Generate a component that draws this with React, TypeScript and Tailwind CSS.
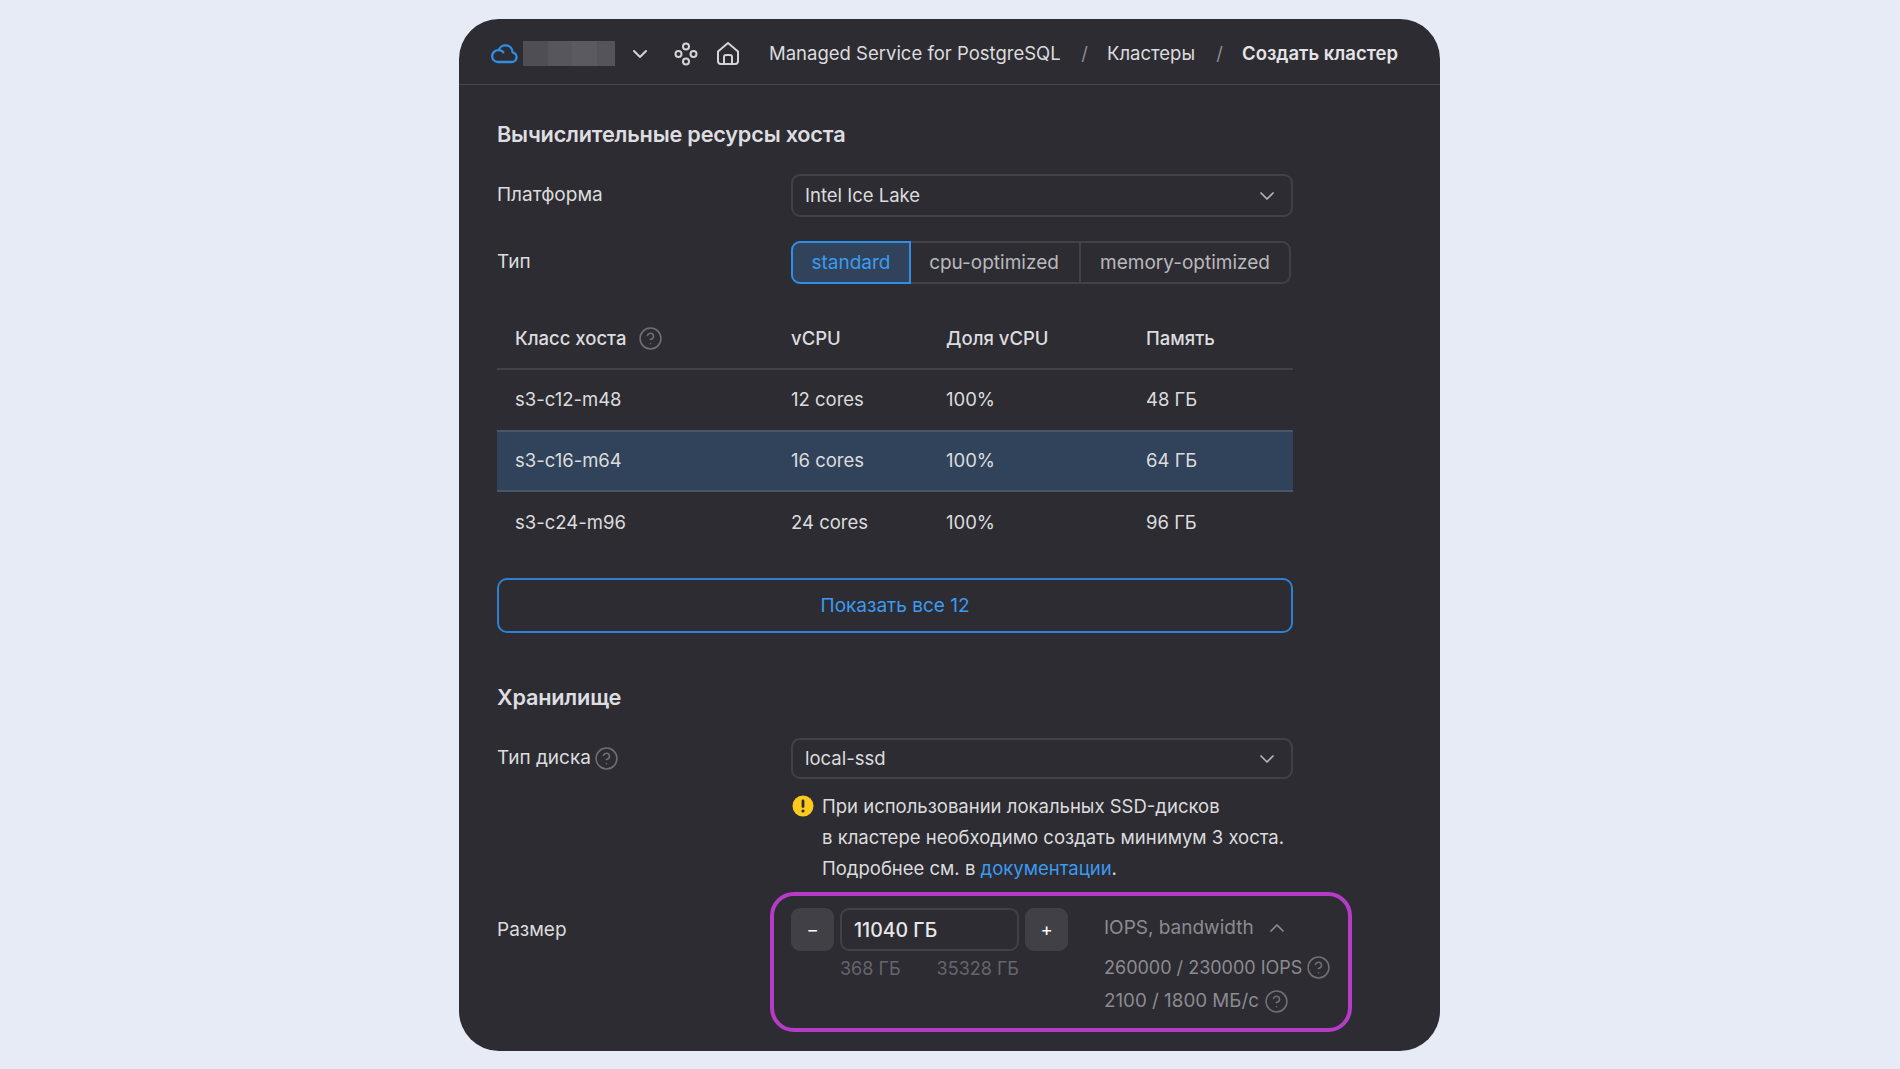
import { ReactNode } from 'react';
import { ChevronDown, ChevronUp, CircleHelp } from 'lucide-react';

const fontStack = 'font-["Inter","Noto_Sans",sans-serif]';

const rows = [
  { name: 's3-c12-m48', cores: '12 cores', share: '100%', memory: '48 ГБ', height: 'h-[60px]', selected: false },
  { name: 's3-c16-m64', cores: '16 cores', share: '100%', memory: '64 ГБ', height: 'h-[62px]', selected: true },
  { name: 's3-c24-m96', cores: '24 cores', share: '100%', memory: '96 ГБ', height: 'h-[61px]', selected: false },
];

function Help() {
  return <CircleHelp size={25} strokeWidth={1.5} className="-my-1 shrink-0 text-[#6f6e74]" />;
}

function CloudIcon() {
  return (
    <svg width="27" height="23" viewBox="0 0 27 23" fill="none" stroke="#2f8fe8" strokeWidth="2.3" strokeLinejoin="round" strokeLinecap="round" className="-mt-[2px]">
      <path d="M6.5 21h14.2a4.9 4.9 0 0 0 .9-9.7A7.2 7.2 0 0 0 7.6 9.2 5.9 5.9 0 0 0 6.5 21Z" />
      <path d="M7.6 9.2c2-.3 3.6.5 4.7 2" />
    </svg>
  );
}

function NodesIcon() {
  return (
    <svg width="24" height="24" viewBox="0 0 24 24" fill="none" stroke="#d4d4d6" strokeWidth="2">
      <circle cx="12" cy="4.5" r="3" />
      <circle cx="4.5" cy="12" r="3" />
      <circle cx="19.5" cy="12" r="3" />
      <circle cx="12" cy="19.5" r="3" />
    </svg>
  );
}

function HomeIcon() {
  return (
    <svg width="24" height="25" viewBox="0 0 24 25" fill="none" stroke="#d4d4d6" strokeWidth="2" strokeLinejoin="round">
      <path d="M2 10.5 12 2l10 8.5V20a3 3 0 0 1-3 3H5a3 3 0 0 1-3-3V10.5Z" />
      <path d="M8 23v-7a2 2 0 0 1 2-2h4a2 2 0 0 1 2 2v7" />
    </svg>
  );
}

function WarningIcon() {
  return (
    <svg width="22" height="22" viewBox="0 0 22 22" className="shrink-0">
      <circle cx="11" cy="11" r="10.5" fill="#fcc921" />
      <rect x="9.6" y="4.6" width="2.8" height="8.4" rx="1.4" fill="#2d2c33" />
      <circle cx="11" cy="16" r="1.6" fill="#2d2c33" />
    </svg>
  );
}

function Select({ value }: { value: string }) {
  return (
    <div className="flex h-full w-[502px] shrink-0 items-center justify-between rounded-[9px] border-2 border-[#424148] px-[12px] text-[#dcdcdd]">
      <span>{value}</span>
      <ChevronDown size={24} strokeWidth={1.7} className="text-[#b5b5b8]" />
    </div>
  );
}

function FormRow({ label, children, className }: { label: ReactNode; children: ReactNode; className?: string }) {
  return (
    <div className={`flex items-center ${className ?? ''}`}>
      <div className="flex w-[294px] shrink-0 items-center gap-[3px] text-[19px] text-[#dcdcdd]">{label}</div>
      {children}
    </div>
  );
}

function Heading({ children, className }: { children: ReactNode; className?: string }) {
  return (
    <h2 className={`h-[28px] text-[21.7px] font-semibold leading-[28px] tracking-[-0.2px] text-[#dedee0] ${className ?? ''}`}>
      {children}
    </h2>
  );
}

export default function App() {
  return (
    <div className={`h-[1069px] w-[1900px] overflow-hidden bg-[#e6ebf5] pl-[459px] pt-[19px] text-[18.5px] ${fontStack}`}>
      <div className="relative h-[1032px] w-[981px] overflow-hidden rounded-[40px] bg-[#2d2c33]">
        {/* breadcrumb bar */}
        <header className="flex h-[66px] items-center border-b border-[#47464c] pl-[32px] pt-[4px] text-[#dcdcdd]">
          <CloudIcon />
          <div className="ml-[5px] flex h-[25px] w-[92px]">
            <div className="w-[25px] bg-[#4f4e55]" />
            <div className="w-[24px] bg-[#57565c]" />
            <div className="w-[25px] bg-[#5b5a60]" />
            <div className="w-[18px] bg-[#55545a]" />
          </div>
          <ChevronDown size={24} strokeWidth={2} className="ml-[13px] text-[#d4d4d6]" />
          <div className="ml-[22px]">
            <NodesIcon />
          </div>
          <div className="ml-[18px]">
            <HomeIcon />
          </div>
          <span className="ml-[29px] w-[293px] whitespace-nowrap">Managed Service for PostgreSQL</span>
          <span className="w-[45px] text-center text-[#8d8c91]">/</span>
          <span className="w-[90px] whitespace-nowrap">Кластеры</span>
          <span className="w-[45px] text-center text-[#8d8c91]">/</span>
          <span className="whitespace-nowrap font-semibold text-[#e4e4e5]">Создать кластер</span>
        </header>

        <main className="pl-[38px]">
          <div className="w-[796px]">
            <Heading className="mt-[35px]">Вычислительные ресурсы хоста</Heading>

            <FormRow label="Платформа" className="mt-[26px] h-[43px]">
              <Select value="Intel Ice Lake" />
            </FormRow>

            <FormRow label="Тип" className="mt-[24px] h-[43px]">
              <div className="flex h-full w-[500px] shrink-0 rounded-[9px] border-2 border-[#424148] text-[19px] text-[#b9b9bc]">
                <div className="-m-[2px] flex w-[120px] items-center justify-center rounded-l-[9px] border-2 border-[#2f8fe8] bg-[#31435b] pt-[2px] text-[#3b9bf0]">
                  standard
                </div>
                <div className="flex w-[172px] items-center justify-center border-r-2 border-[#424148] pt-[2px]">cpu-optimized</div>
                <div className="flex flex-1 items-center justify-center pt-[2px]">memory-optimized</div>
              </div>
            </FormRow>

            {/* host class table */}
            <div className="mt-[23px] text-[#dcdcdd]">
              <div className="grid h-[63px] grid-cols-[294px_155px_200px_1fr] items-center border-b-2 border-[#424148] pt-[2px] font-medium text-[#dcdcde]">
                <div className="flex items-center gap-[12px] pl-[18px]">
                  Класс хоста <Help />
                </div>
                <div>vCPU</div>
                <div>Доля vCPU</div>
                <div>Память</div>
              </div>
              {rows.map((row) => (
                <div
                  key={row.name}
                  className={`grid grid-cols-[294px_155px_200px_1fr] items-center ${row.height} ${
                    row.selected ? 'border-y-2 border-[#47566b] bg-[#31435b]' : ''
                  }`}
                >
                  <div className="pl-[18px]">{row.name}</div>
                  <div>{row.cores}</div>
                  <div>{row.share}</div>
                  <div>{row.memory}</div>
                </div>
              ))}
            </div>

            <div className="mt-[25px] flex h-[55px] items-center justify-center rounded-[10px] border-2 border-[#2f80d0] pt-[2px] text-[19px] text-[#3b9bf0]">
              Показать все 12
            </div>

            <Heading className="mt-[50px]">Хранилище</Heading>

            <FormRow
              label={
                <>
                  Тип диска <Help />
                </>
              }
              className="mt-[27px] h-[41px]"
            >
              <Select value="local-ssd" />
            </FormRow>

            <div className="ml-[294px] mt-[12px] flex gap-[8px] leading-[31px] text-[#dcdcdd]">
              <div className="pl-px pt-[4px]">
                <WarningIcon />
              </div>
              <p className="whitespace-nowrap">
                При использовании локальных SSD-дисков
                <br />
                в кластере необходимо создать минимум 3 хоста.
                <br />
                Подробнее см. в <span className="text-[#3b9bf0]">документации</span>.
              </p>
            </div>

            <div className="mt-[24px] flex items-start">
              <div className="flex h-[43px] w-[294px] shrink-0 items-center pt-[2px] text-[19px] text-[#dcdcdd]">Размер</div>
              <div className="w-[277px] shrink-0">
                <div className="flex h-[43px] gap-[6px]">
                  <div className="flex w-[43px] items-center justify-center rounded-[9px] bg-[#414046] text-white">−</div>
                  <div className="flex flex-1 items-center rounded-[9px] border-2 border-[#424148] pl-[12px] pt-[2px] text-[19.5px] font-medium text-[#e8e8e9]">
                    11040 ГБ
                  </div>
                  <div className="flex w-[43px] items-center justify-center rounded-[9px] bg-[#414046] text-white">+</div>
                </div>
                <div className="mt-[4px] flex justify-between px-[49px] text-[18px] text-[#66656b]">
                  <span>368 ГБ</span>
                  <span>35328 ГБ</span>
                </div>
              </div>
              <div className="ml-[36px] shrink-0 text-[#8c8b90]">
                <div className="flex h-[40px] items-center gap-[11px] whitespace-nowrap text-[19px]">
                  IOPS, bandwidth <ChevronUp size={24} strokeWidth={1.7} />
                </div>
                <div className="mt-[3px] flex h-[33px] items-center gap-[4px] whitespace-nowrap text-[18px]">
                  260000 / 230000 IOPS <Help />
                </div>
                <div className="flex h-[33px] items-center gap-[5px] whitespace-nowrap pt-[2px] text-[18.8px]">
                  2100 / 1800 МБ/с <Help />
                </div>
              </div>
            </div>
          </div>
        </main>

        {/* annotation frame over the size row */}
        <div className="absolute left-[311px] top-[873px] h-[140px] w-[582px] rounded-[24px] border-4 border-[#b63cc8]" />
      </div>
    </div>
  );
}
